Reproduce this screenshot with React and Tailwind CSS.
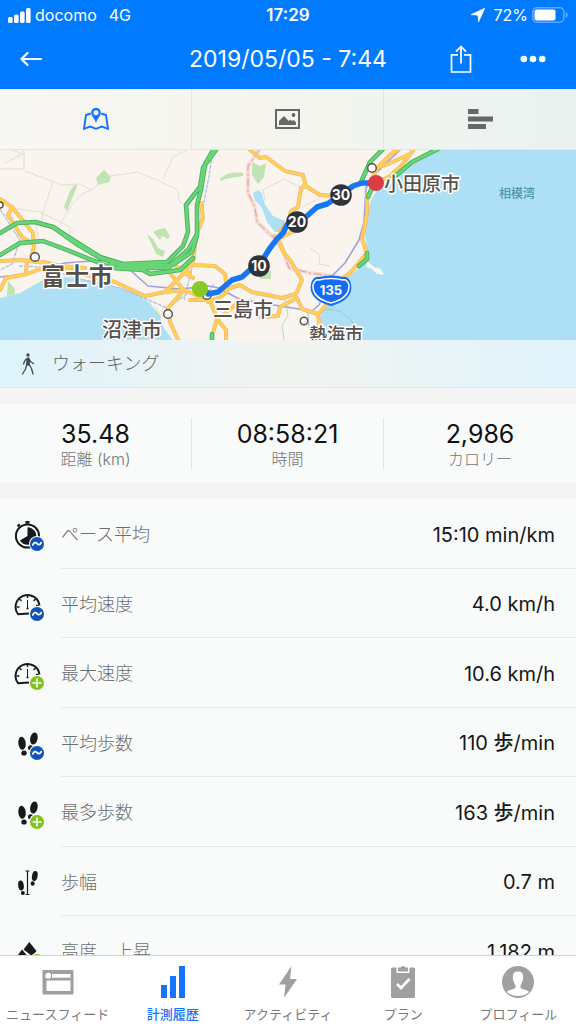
import React from 'react';

const svgText = { fontFamily: 'Inter, "Noto Sans CJK JP", sans-serif' };

function StatusBar() {
  return (
    <div className="grid h-[30px] grid-cols-3 items-center px-2 text-[16px] leading-5">
      <div className="flex items-center gap-1">
        <svg className="h-[15px] w-[23px] shrink-0" viewBox="0 0 23 15" fill="currentColor" aria-hidden="true">
          <rect x="0" y="9" width="4.6" height="6" rx="1.5" />
          <rect x="6" y="6.5" width="4.6" height="8.500" rx="1.5" />
          <rect x="12" y="3.500" width="4.600" height="11.500" rx="1.5" />
          <rect x="18" y="0" width="4.600" height="15" rx="1.5" />
        </svg>
        <span>docomo</span>
        <span className="ml-2">4G</span>
      </div>
      <div className="text-center text-[17px] font-semibold">17:29</div>
      <div className="flex items-center justify-end gap-1">
        <svg className="mr-1 h-[14px] w-[14px]" viewBox="0 0 14 14" fill="currentColor" aria-hidden="true">
          <path d="M13.8.2 0 6.600l7 .6L7.600 14z" stroke="currentColor" strokeWidth="0.600" strokeLinejoin="round" />
        </svg>
        <span>72%</span>
        <svg className="h-4 w-9" viewBox="0 0 36 16" aria-hidden="true">
          <rect x="0.800" y="0.800" width="31" height="14.400" rx="4" fill="none" stroke="#5fa9ff" strokeWidth="1.500" />
          <rect x="2.500" y="2.500" width="21" height="11" rx="2" fill="#fff" />
          <path d="M33.500 5v6c3-1 3-5 0-6z" fill="#5fa9ff" />
        </svg>
      </div>
    </div>
  );
}

function Header() {
  return (
    <header className="shrink-0 bg-[#007aff] text-white">
      <StatusBar />
      <div className="grid h-[59px] grid-cols-[1fr_auto_1fr] items-center px-5 pb-[2px]">
        <button type="button" aria-label="戻る" className="h-8 w-6">
          <svg className="h-4 w-[22px]" viewBox="0 0 22 16" fill="none" stroke="currentColor" strokeWidth="2.200" strokeLinecap="round" strokeLinejoin="round">
            <path d="M21 8H1.500M7.500 2 1.500 8l6 6" />
          </svg>
        </button>
        <h1 className="text-[23px] leading-8">2019/05/05 - 7:44</h1>
        <div className="flex items-center justify-end gap-12 pr-[10px]">
          <button type="button" aria-label="共有">
            <svg className="h-7 w-[22px]" viewBox="0 0 22 28" fill="none" stroke="currentColor" strokeWidth="1.700">
              <path d="M8 9.800H1.500V27h19V9.800H14M11 18.500V1.500M6 6.700l5-5.200 5 5.200" />
            </svg>
          </button>
          <button type="button" aria-label="その他">
            <svg className="h-2 w-[26px]" viewBox="0 0 26 8" fill="currentColor">
              <circle cx="3.800" cy="4" r="3.300" />
              <circle cx="13" cy="4" r="3.300" />
              <circle cx="22.200" cy="4" r="3.300" />
            </svg>
          </button>
        </div>
      </div>
    </header>
  );
}

function ViewTabs() {
  return (
    <nav className="grid h-[61px] shrink-0 grid-cols-3 divide-x divide-[#e4e5e0] border-b border-[#e3e6e2] bg-linear-to-r from-[#f8f7f3] via-[#f5f5ee] to-[#e9f2f0]">
      <button type="button" aria-label="地図" className="flex items-center justify-center text-[#1472ff]">
        <svg className="h-[22px] w-[26px]" viewBox="0 0 26 22" fill="none" stroke="currentColor" strokeWidth="1.900">
          <path d="M7.800 5.500 3 7 1 20.800l6.200-2.200 5.800 2.200 5.800-2.200L25 20.800 23 7l-4.800-1.500" />
          <path fillRule="evenodd" fill="currentColor" stroke="none" d="M13 0C10.300 0 8.200 2 8.200 4.700c0 3 3.300 5.500 4.800 10.300 1.500-4.800 4.800-7.300 4.800-10.300C17.800 2 15.700 0 13 0zm0 2.200a2.500 2.500 0 1 1 0 5 2.500 2.500 0 0 1 0-5z" />
        </svg>
      </button>
      <button type="button" aria-label="写真" className="flex items-center justify-center text-[#666766]">
        <svg className="h-5 w-[25px]" viewBox="0 0 25 20">
          <rect x="1" y="1" width="23" height="18" fill="none" stroke="currentColor" strokeWidth="2" />
          <circle cx="18.500" cy="6" r="1.900" fill="currentColor" />
          <path d="M4 16v-4l5-5 4.500 5 1.800-1.500 1.400 1.500L18.500 11l2.500 2.500V16z" fill="currentColor" />
        </svg>
      </button>
      <button type="button" aria-label="詳細" className="flex items-center justify-center text-[#666766]">
        <svg className="h-5 w-[25px]" viewBox="0 0 25 20" fill="currentColor">
          <path d="M0 0h10.500v5H0zM0 7.500h25v5H0zM0 15h18v5H0z" />
        </svg>
      </button>
    </nav>
  );
}

const HIGHWAYS = [
  'M0 233 17 223 35 222 53 227 70 238 100 257 123 264 167 262 183 246 188 232 186 205 200 187 203 168 213 150',
  'M0 255 20 243 43 241 67 250 97 262 112 268 143 270 150 274 180 270 193 258',
  'M53 227 75 243 100 258 125 266 170 265 188 250 197 234 197 205 201 190 205 165 216 150',
  'M110 264 140 268 168 268 192 252 197 235',
  'M368 197 372 188M361 182 370 162 384 148M393 178 412 162 440 148M359 266 367 259 367 253',
  'M212 334V342',
];

const ROADS = [
  'M0 199 12 207 33 233 34 247 30 261M12 207 8 215 22 237 31 243',
  'M0 261 22 260 45 263 65 269 90 276 115 282 145 296 165 292 185 290 200 297 240 285 252 292 282 298 296 294 302 280 290 260 284 253 281 245 275 236',
  'M0 290 6 278 27 274 48 266M27 263 26 272M43 262 60 266 85 268',
  'M165 292 183 274 193 262 196 236 203 218 201 203M170 273 184 291M183 272 193 278M177 267 190 273M193 265 215 266 225 274 227 292 219 298 208 302',
  'M184 290 168 308 170 322 179 342M190 300 210 300 217 319 212 336M217 319 226 330 226 342M217 319 232 308 240 300',
  'M250 150 260 158 266 157 285 171 303 175 306 186 301 188 298 207 291 211 288 222 280 231M304 185 320 195 340 196',
  'M282 237 298 229 307 217M284 253 278 238',
  'M367 194 367 214 362 239 367 253 352 271 341 280 331 300 318 314 320 331M318 314 302 309 297 298 280 307 278 316 260 317',
  'M370 183 378 167 391 154 399 149M378 167 388 164 410 154M390 176 402 165 414 149M376 183 390 176',
];

const TRAILS = [
  'M0 169 24 169 24 150M5 163 23 154 13 150M25 171 62 185 80 184 91 190 82 194 73 203 60 224M53 182 43 212 41 224',
  'M91 190 110 176 132 173 137 172 157 180 178 190 179 200 190 212M163 179 173 157 187 150',
  'M12 208 40 212 70 227 70 244M35 222 39 240 60 245',
  'M265 200 263 190 284 179 304 189M302 207 320 198M310 248 320 255 319 264 330 266M240 304 256 296 272 292',
];

const OUTLINE = { fill: 'none', strokeLinejoin: 'round', strokeLinecap: 'round' };

const PLACES = [
  { name: '富士市', x: 41, y: 285, size: 24, weight: 700 },
  { name: '沼津市', x: 102, y: 337, size: 20, weight: 500 },
  { name: '三島市', x: 213, y: 317, size: 20, weight: 500 },
  { name: '小田原市', x: 384, y: 191, size: 19, weight: 500 },
  { name: '熱海市', x: 309, y: 341, size: 18, weight: 500 },
];

const MILESTONES = [
  { km: '10', x: 259, y: 266 },
  { km: '20', x: 297, y: 222 },
  { km: '30', x: 341, y: 195 },
];

function RouteMap() {
  return (
    <svg className="block h-[190px] w-full shrink-0" viewBox="0 150 576 190" preserveAspectRatio="xMidYMid slice" role="img" aria-label="ルート地図">
      <rect x="0" y="150" width="576" height="190" fill="#f9f4ed" />
      <g fill="#aee0f5">
        <path d="M576 150H430L412 162 393 177 376 192 372 198 367 212 365 235 367 248 366 260 357 270 343 280 332 300 320 317 322 327 333 340H576z" />
        <path d="M0 298 20 293 43 280 67 277 100 282 133 292 150 303 160 317 163 327 173 340H0z" />
        <path d="M253 193 258 190 262 193 265 205 273 216 285 221 283 232 275 232 267 222 262 208 255 200z" />
      </g>
      <path d="M367 261 374 267 381 269 384 275 377 274 372 269 366 267z" fill="#faf7f1" />
      <g fill="#bfe3b2">
        <path d="M96 178 104 170 111 177 109 182 98 185zM70 191 75 184 77 186 67 211 64 207zM153 232 160 229 165 228 170 236 168 239 162 236 160 240zM147 234 153 239 158 248 165 251 163 257 156 254z" />
        <path d="M220 179Q228 171 243 173Q245 177 236 177Q227 178 220 181zM252 162 260 166 266 163 264 177 258 184 252 175zM258 272 271 271 271 279 260 279zM8 281 15 289 15 294 7 296zM155 307 162 318 158 317z" />
      </g>
      <g stroke="#e2ddd5" strokeWidth="1" {...OUTLINE}>
        {TRAILS.map((d) => <path key={d} d={d} />)}
      </g>
      <g stroke="#f8dbd6" strokeWidth="4" {...OUTLINE}>
        <path d="M259 150 248 166 248 193 255 207 257 222 275 239 283 251 289 268 310 273 340 277" />
      </g>
      <path d="M259 150 248 166 248 193 255 207 257 222 275 239 283 251 289 268 310 273 340 277" stroke="#dc9d94" strokeWidth="1" strokeDasharray="8 3 2 3" fill="none" />
      <g stroke="#a9c4df" strokeWidth="1.300" strokeDasharray="4 1" fill="none">
        <path d="M0 209 20 240 12 264 0 270M19 266 40 267 80 279 120 288 167 308 190 292M213 150 209 176 201 218 194 260 184 300" />
        <path d="M308 312 309 328M190 288 208 293 214 284" />
      </g>
      <path d="M285 299 288 315 282 326 284 340" stroke="#b9ddb0" fill="none" />
      <g stroke="#9aa3dd" strokeWidth="1.600" {...OUTLINE}>
        <path d="M0 277 25 274 65 263 105 260 130 270 148 286 180 289 208 286 219 288 239 299 280 306 312 311 319 305 331 277 345 263 359 240 364 222 366 188 376 173 400 150" />
      </g>
      <path d="M320 315 326 309 340 311 351 320 355 327" stroke="#91c9e9" fill="none" />
      <g stroke="#eeb184" strokeWidth="4" {...OUTLINE}>
        {ROADS.map((d) => <path key={d} d={d} />)}
      </g>
      <g stroke="#ffd052" strokeWidth="2.800" {...OUTLINE}>
        {ROADS.map((d) => <path key={d} d={d} />)}
      </g>
      <g stroke="#45ad5c" strokeWidth="4.500" {...OUTLINE}>
        {HIGHWAYS.map((d) => <path key={d} d={d} />)}
      </g>
      <g stroke="#68d577" strokeWidth="2.800" {...OUTLINE}>
        {HIGHWAYS.map((d) => <path key={d} d={d} />)}
      </g>
      <g fill="#fff" stroke="#57534f" strokeWidth="1.500">
        <circle cx="35" cy="257" r="4.300" />
        <circle cx="0" cy="205" r="3" />
        <circle cx="168" cy="314" r="4.300" />
        <circle cx="207" cy="295" r="4.300" />
        <circle cx="304" cy="321" r="3.700" />
        <circle cx="372" cy="168" r="4.300" />
      </g>
      <path d="M208 294 218 292 225 286 232 280 242 277 252 268 259 264 265 256 270 248 277 239 283 233 287 225 297 222 307 216 317 207 327 204 341 195 353 186 362 183 377 183" stroke="#1677f5" strokeWidth="5.500" {...OUTLINE} />
      <g style={svgText} fill="#57514d" stroke="#fff" strokeWidth="3" strokeLinejoin="round" paintOrder="stroke">
        {PLACES.map((p) => <text key={p.name} x={p.x} y={p.y} fontSize={p.size} fontWeight={p.weight}>{p.name}</text>)}
      </g>
      <text style={svgText} x="499" y="198" fontSize="12" fontWeight="500" fill="#4f94ad">相模湾</text>
      <circle cx="200" cy="289" r="8" fill="#8ac926" />
      <circle cx="376" cy="183" r="8" fill="#dc3d43" />
      {MILESTONES.map((m) => (
        <g key={m.km}>
          <circle cx={m.x} cy={m.y} r="10.800" fill="#30343a" />
          <text style={svgText} x={m.x} y={m.y + 5} textAnchor="middle" fontSize="14" fontWeight="700" fill="#fff">{m.km}</text>
        </g>
      ))}
      <path d="M319 278Q331 275 343 278Q348 277 350 284Q353 299 331 305Q309 299 312 284Q314 277 319 278z" fill="#176bf3" stroke="#176bf3" strokeWidth="2" />
      <path d="M319 280Q331 277 343 280Q347 279 349 285Q350 298 331 303Q312 298 313 285Q315 279 319 280z" fill="#176bf3" stroke="#fff" strokeWidth="1.500" />
      <text style={svgText} x="331" y="295" textAnchor="middle" fontSize="13" fontWeight="700" fill="#fff">135</text>
    </svg>
  );
}

function ActivityBar() {
  return (
    <div className="flex h-12 shrink-0 items-center gap-4 border-b border-[#e1e7e7] bg-linear-to-r from-[#def3fc] via-[#f2f4f0] to-[#dff3fc] pl-[21px] text-[18px] font-light text-[#5c6365]">
      <svg className="h-[22px] w-[15px]" viewBox="0 0 15 22" fill="none" stroke="#444a4c" strokeWidth="1.300" strokeLinecap="round" strokeLinejoin="round" aria-hidden="true">
        <circle cx="7" cy="2" r="1.700" fill="#444a4c" stroke="none" />
        <path d="M6.500 5.200 4 7.200 2.500 11M7.800 5.200 9.500 8.500l3 2.200M6.200 5.500 5.500 12.500 4.500 16 1.500 21M8.300 6.500v5l2.200 4L12 21" />
        <path d="M7.200 5.500 7 12" strokeWidth="2" />
      </svg>
      <span>ウォーキング</span>
    </div>
  );
}

const STATS = [
  { value: '35.48', label: '距離 (km)' },
  { value: '08:58:21', label: '時間' },
  { value: '2,986', label: 'カロリー' },
];

function Summary() {
  return (
    <dl className="my-4 grid h-[79px] shrink-0 grid-cols-3 divide-x divide-[#e3e5e6] bg-[#f9fbfa] py-[14px]">
      {STATS.map((s) => (
        <div key={s.label} className="flex flex-col-reverse items-center justify-center">
          <dt className="text-[16px] leading-5 font-light text-[#737576]">{s.label}</dt>
          <dd className="text-[25px] leading-[30px] text-[#101112]">{s.value}</dd>
        </div>
      ))}
    </dl>
  );
}

function AverageBadge() {
  return (
    <g>
      <circle cx="23" cy="24" r="8" fill="#f9fbfa" />
      <circle cx="23" cy="24" r="7" fill="#1254b5" />
      <path d="M18.800 25c1-3 3-2.800 4.200-1.400s3.200 1.700 4.200-1" fill="none" stroke="#fff" strokeWidth="1.700" strokeLinecap="round" />
    </g>
  );
}

function MaxBadge() {
  return (
    <g>
      <circle cx="23" cy="24" r="8" fill="#f9fbfa" />
      <circle cx="23" cy="24" r="7" fill="#7fc41c" />
      <path d="M18.500 24h9M23 19.500v9" fill="none" stroke="#fff" strokeWidth="1.700" />
    </g>
  );
}

function Stopwatch() {
  return (
    <g fill="#17191a">
      <circle cx="13.500" cy="16" r="11.600" fill="none" stroke="#17191a" strokeWidth="2" />
      <path d="M11.500 1h4v2.800h-4zM2.800 5.500 5 3.500l1.500 1.700-2.200 2z" />
      <path d="M13.500 7.200A8.800 8.800 0 1 1 5.900 20.500L13.500 16z" />
    </g>
  );
}

function Gauge() {
  return (
    <g fill="none" stroke="#17191a">
      <path d="M15 23.500 4 24.200A12 12 0 1 1 25.500 15.500" strokeWidth="2" strokeLinejoin="round" />
      <path d="M13.500 5v3M5.500 9l2 2M21.500 9l-2 2M2.500 17h3M22 15.500h2.500" strokeWidth="1.400" />
      <path d="M13.500 10v8" strokeWidth="1" />
      <path d="M12.500 18.500h2" strokeWidth="1.500" />
    </g>
  );
}

function Footprints() {
  return (
    <g fill="#17191a">
      <ellipse cx="8" cy="14.300" rx="3.700" ry="6.500" transform="rotate(-6 8 14.300)" />
      <ellipse cx="10" cy="24" rx="2.700" ry="2.600" />
      <ellipse cx="19.900" cy="9.500" rx="3.700" ry="6.200" transform="rotate(12 19.900 9.500)" />
      <ellipse cx="16.500" cy="18.800" rx="2.500" ry="2.600" />
    </g>
  );
}

function StrideMark() {
  return (
    <g fill="#17191a">
      <ellipse cx="7" cy="17.500" rx="2.800" ry="5" transform="rotate(-8 7 17.500)" />
      <ellipse cx="8.800" cy="25" rx="2" ry="2" />
      <ellipse cx="20.800" cy="8" rx="2.800" ry="5" transform="rotate(10 20.800 8)" />
      <ellipse cx="18.700" cy="15.500" rx="2" ry="2.200" />
      <path d="M11.500 3h4M11.500 26.500h4M13.500 3v23.500" stroke="#17191a" strokeWidth="1.200" />
    </g>
  );
}

function Mountains() {
  return (
    <g fill="#17191a">
      <path d="M15.300 5 22.500 14 18 19 9.500 12.500z" />
      <path d="M8 12.500 13 18.500H3.500z" />
    </g>
  );
}

const METRICS = [
  { label: 'ペース平均', value: '15:10 min/km', Icon: Stopwatch, Badge: AverageBadge },
  { label: '平均速度', value: '4.0 km/h', Icon: Gauge, Badge: AverageBadge },
  { label: '最大速度', value: '10.6 km/h', Icon: Gauge, Badge: MaxBadge },
  { label: '平均歩数', value: <>110 <b className="font-medium">歩</b>/min</>, Icon: Footprints, Badge: AverageBadge },
  { label: '最多歩数', value: <>163 <b className="font-medium">歩</b>/min</>, Icon: Footprints, Badge: MaxBadge },
  { label: '歩幅', value: '0.7 m', Icon: StrideMark },
  { label: '高度　上昇', value: '1,182 m', Icon: Mountains, Badge: MaxBadge },
];

function MetricList() {
  return (
    <dl className="shrink-0 bg-[#f9fbfa]">
      {METRICS.map(({ label, value, Icon, Badge }) => (
        <div key={label} className="flex odd:h-[70px] even:h-[69px]">
          <div className="flex w-[61px] shrink-0 items-center pt-1 pl-[14px]">
            <svg className="h-8 w-8" viewBox="0 0 32 32" aria-hidden="true">
              <Icon />
              {Badge && <Badge />}
            </svg>
          </div>
          <div className="flex flex-1 items-center justify-between border-b border-[#e7e9e9] pt-[2px] pr-[21px]">
            <dt className="text-[18px] font-light text-[#6c6e6f]">{label}</dt>
            <dd className="text-[20px] text-[#151617]">{value}</dd>
          </div>
        </div>
      ))}
    </dl>
  );
}

const NAV = [
  {
    label: 'ニュースフィード',
    icon: (
      <g>
        <path fillRule="evenodd" d="M1.500 4h29q1 0 1 1v22.500q0 1-1 1h-29q-1 0-1-1V5q0-1 1-1zM10 8v3.700h18.500V8zM4.500 14.500v10.500h24V14.500z" />
        <circle cx="6.200" cy="9.700" r="2.900" fill="#fff" />
      </g>
    ),
  },
  {
    label: '計測履歴',
    active: true,
    icon: <path d="M4 19h6v13H4zM13 10h6v22h-6zM22 0h6v32h-6z" />,
  },
  { label: 'アクティビティ', icon: <path d="M19.500 0 7 18.500h6.500L12 32 25 13h-7z" /> },
  {
    label: 'プラン',
    icon: (
      <g>
        <path d="M5.500 1.500h4V7h13V1.500h4q1.500 0 1.500 1.500v27.500q0 1.500-1.500 1.500h-21Q4 32 4 30.500V3q0-1.500 1.500-1.500z" />
        <path d="M11 1.500h2.500Q14 0 16 0t2.500 1.500H21v4H11z" />
        <path d="m10 18 4 4 8.500-9" fill="none" stroke="#fff" strokeWidth="2.800" />
      </g>
    ),
  },
  {
    label: 'プロフィール',
    icon: (
      <g>
        <circle cx="16" cy="16" r="16" />
        <path d="M16 5.500c-4 0-5.700 2.200-5 6.500-.6 2 .3 3 1 3.500.3 2 .8 3 1.500 3.800v2.200c-.6 2-7 2-8.500 4.500 5 5.200 17 5.200 22 0-1.500-2.500-7.900-2.500-8.500-4.500v-2.200c.7-.8 1.200-1.800 1.500-3.800.7-.5 1.600-1.500 1-3.500.7-4.300-1-6.500-5-6.500z" fill="#fff" />
      </g>
    ),
  },
];

function BottomNav() {
  return (
    <nav className="grid h-[69px] shrink-0 grid-cols-5 border-t border-[#ced6d3] bg-white text-[13px] leading-5">
      {NAV.map(({ label, icon, active }) => (
        <a
          key={label}
          href="#"
          aria-current={active ? 'page' : undefined}
          className={`flex flex-col items-center gap-1.5 pt-[10px] whitespace-nowrap ${active ? 'font-medium text-[#1472ff]' : 'text-[#777777]'}`}
        >
          <svg className={`h-8 w-8 shrink-0 ${active ? 'text-[#1472ff]' : 'text-[#a0a0a0]'}`} viewBox="0 0 32 32" fill="currentColor" aria-hidden="true">
            {icon}
          </svg>
          <span>{label}</span>
        </a>
      ))}
    </nav>
  );
}

export default function App() {
  return (
    <div className="flex h-dvh flex-col overflow-hidden bg-[#f4f4f4] font-['Inter','Noto_Sans_CJK_JP',sans-serif]">
      <Header />
      <ViewTabs />
      <main className="flex min-h-0 flex-1 flex-col overflow-y-auto [scrollbar-width:none]">
        <RouteMap />
        <ActivityBar />
        <Summary />
        <MetricList />
      </main>
      <BottomNav />
    </div>
  );
}
